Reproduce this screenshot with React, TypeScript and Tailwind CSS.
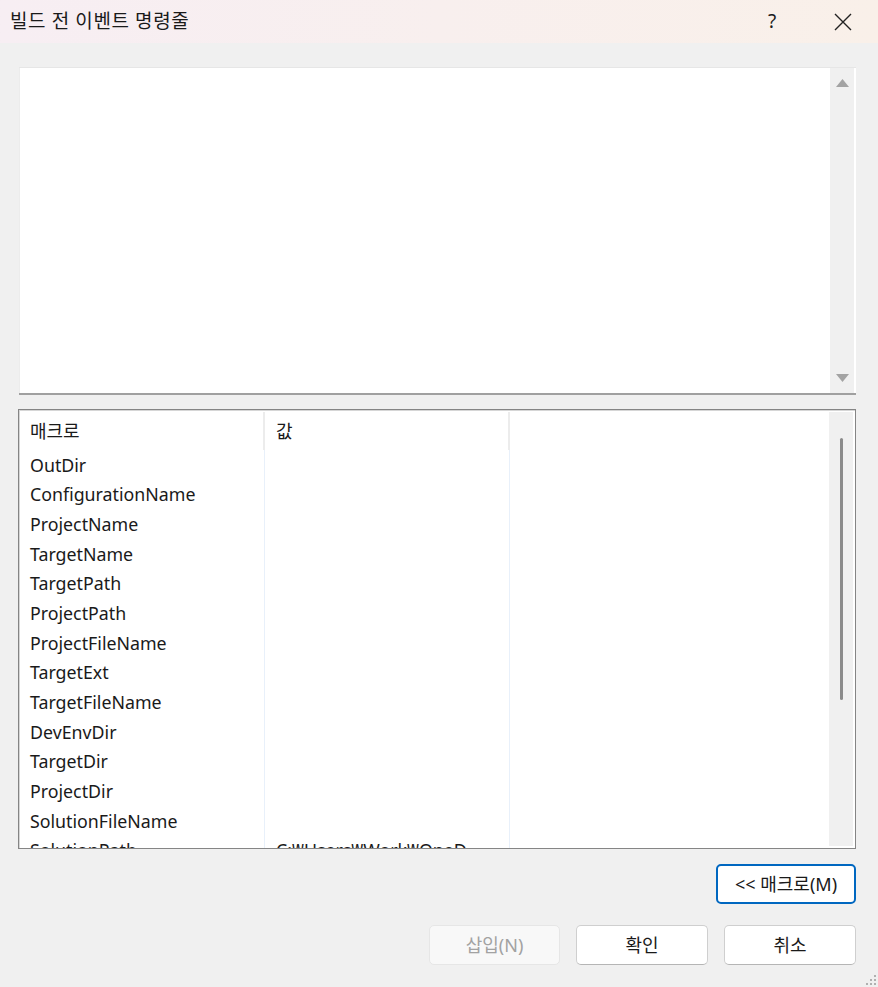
import React from 'react';

const macros: { name: string; value: string }[] = [
  { name: 'OutDir', value: '' },
  { name: 'ConfigurationName', value: '' },
  { name: 'ProjectName', value: '' },
  { name: 'TargetName', value: '' },
  { name: 'TargetPath', value: '' },
  { name: 'ProjectPath', value: '' },
  { name: 'ProjectFileName', value: '' },
  { name: 'TargetExt', value: '' },
  { name: 'TargetFileName', value: '' },
  { name: 'DevEnvDir', value: '' },
  { name: 'TargetDir', value: '' },
  { name: 'ProjectDir', value: '' },
  { name: 'SolutionFileName', value: '' },
  { name: 'SolutionPath', value: 'C:₩Users₩Work₩OneD' },
];

const font = { fontFamily: '"Noto Sans", "Noto Sans CJK KR", sans-serif' };

const Triangle: React.FC<{ down?: boolean }> = ({ down }) => (
  <svg width="13" height="8" viewBox="0 0 13 8" className="block">
    {down ? <path d="M0 0h13L6.5 8z" fill="#a3a3a3" /> : <path d="M6.5 0L13 8H0z" fill="#a3a3a3" />}
  </svg>
);

const App: React.FC = () => {
  return (
    <div className="w-[878px] h-[987px] bg-[#f0f0f0] flex flex-col relative overflow-hidden text-[#1a1a1a]" style={font}>
      {/* Title bar */}
      <div className="h-[43px] shrink-0 flex items-center bg-gradient-to-r from-[#f7eef3] to-[#f9f0e9]">
        <div className="pl-[10px] text-[19px] flex-1 tracking-[0.6px]">빌드 전 이벤트 명령줄</div>
        <div className="w-[40px] text-center text-[19px] mr-[33px]">?</div>
        <div className="w-[36px] mr-[17px] flex justify-center">
          <svg width="18" height="18" viewBox="0 0 18 18">
            <path d="M1 1L17 17M17 1L1 17" stroke="#222" strokeWidth="1.4" />
          </svg>
        </div>
      </div>

      {/* Command text box */}
      <div className="mt-[24px] ml-[19px] mr-[22px] h-[328px] bg-white flex border-t border-[#e6e6e6] border-b-2 border-b-[#a0a0a0] shadow-[inset_1px_0_0_#ececec]">
        <div className="flex-1" />
        <div className="w-[24px] mr-[2px] bg-[#f0f0f0] flex flex-col items-center justify-between py-[11px]">
          <Triangle />
          <Triangle down />
        </div>
      </div>

      {/* Macro list */}
      <div className="mt-[14px] ml-[18px] mr-[22px] h-[440px] bg-white border border-[#858585] shadow-[inset_1px_1px_0_#d6d6d6] flex overflow-hidden">
        <div className="flex-1 flex flex-col overflow-hidden pt-[2px]">
          <div className="flex h-[38px] shrink-0 items-center text-[18px]">
            <div className="w-[246px] h-full pl-[11px] flex items-center border-r-2 border-[#ececec]">매크로</div>
            <div className="w-[245px] h-full pl-[11px] flex items-center border-r-2 border-[#ececec]">값</div>
          </div>
          <div className="flex-1 flex overflow-hidden">
            <div className="w-[246px] border-r border-[#e8f0fa] flex flex-col">
              {macros.map((m) => (
                <div key={m.name} className="h-[29.7px] shrink-0 pl-[11px] flex items-center text-[17.8px] whitespace-nowrap">
                  {m.name}
                </div>
              ))}
            </div>
            <div className="w-[245px] border-r border-[#e8f0fa] flex flex-col overflow-hidden">
              {macros.map((m) => (
                <div key={m.name} className="h-[29.7px] shrink-0 pl-[11px] flex items-center text-[17.8px] whitespace-nowrap">
                  {m.value}
                </div>
              ))}
            </div>
          </div>
        </div>
        <div className="w-[24px] mr-[2px] my-[2px] bg-[#f0f0f0] flex justify-center pt-[26px]">
          <div className="w-[3px] h-[262px] bg-[#8b8b8b] rounded-full" />
        </div>
      </div>

      {/* Macro toggle button */}
      <div className="mt-[15px] mr-[22px] flex justify-end">
        <button className="w-[140px] h-[40px] rounded-[5px] border-2 border-[#0067c0] bg-white text-[18px] flex items-center justify-center">
          &lt;&lt; 매크로(M)
        </button>
      </div>

      {/* Dialog buttons */}
      <div className="mt-[21px] mr-[22px] flex justify-end gap-[16px]">
        <button disabled className="w-[131px] h-[40px] rounded-[5px] border border-[#e6e6e6] bg-[#f8f8f8] text-[#a2a2a2] text-[18px]">
          삽입(N)
        </button>
        <button className="w-[132px] h-[40px] rounded-[5px] border border-[#cfcfcf] border-b-[#b5b5b5] bg-white text-[18px]">
          확인
        </button>
        <button className="w-[132px] h-[40px] rounded-[5px] border border-[#cfcfcf] border-b-[#b5b5b5] bg-white text-[18px]">
          취소
        </button>
      </div>

      {/* Resize grip */}
      <svg className="absolute right-[1px] bottom-[1px]" width="12" height="12" viewBox="0 0 12 12">
        {[
          [9, 1],
          [5, 5],
          [9, 5],
          [1, 9],
          [5, 9],
          [9, 9],
        ].map(([x, y]) => (
          <rect key={`${x}-${y}`} x={x} y={y} width="2" height="2" fill="#b0b0b0" />
        ))}
      </svg>
    </div>
  );
};

export default App;
